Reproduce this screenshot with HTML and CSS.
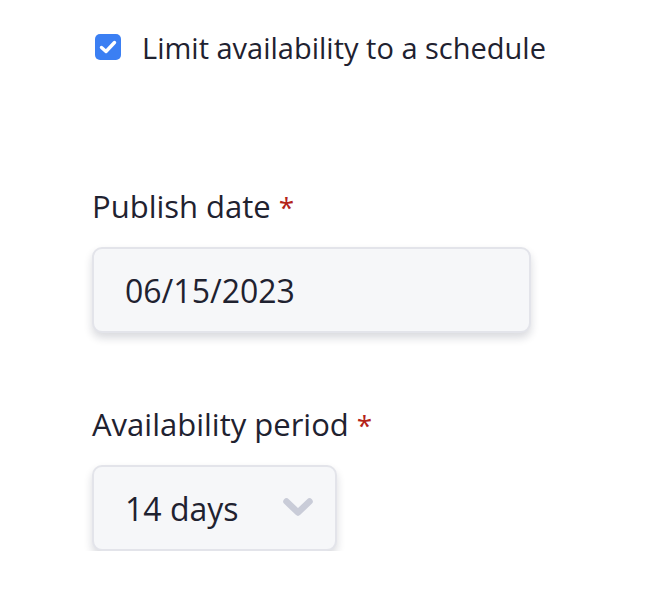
FILE: index.html
```html
<!DOCTYPE html>
<html lang="en">
<head>
    <meta charset="UTF-8">
    <meta name="viewport" content="width=device-width, initial-scale=1.0">
    <title>Schedule</title>
    <link rel="stylesheet" href="styles.css">
</head>
<body>
    <form class="panel">
        <label class="check-row">
            <span class="check-box">
                <svg width="18" height="14" viewBox="0 0 18 14"><path d="M2.5 7.5 L7 11.5 L15.5 2.5" fill="none" stroke="#fff" stroke-width="3.4" stroke-linecap="round" stroke-linejoin="round"/></svg>
            </span>
            <span class="check-text">Limit availability to a schedule</span>
        </label>

        <div class="field field-date">
            <label class="field-label">Publish date <span class="req">*</span></label>
            <div class="input date-input">06/15/2023</div>
        </div>

        <div class="field field-period">
            <label class="field-label">Availability period <span class="req">*</span></label>
            <div class="input select-input">
                <span>14 days</span>
                <svg class="chevron" width="32" height="22" viewBox="0 0 32 22"><path d="M4.5 4.5 L16 15.5 L27.5 4.5" fill="none" stroke="#c9ccd8" stroke-width="6.5" stroke-linecap="round" stroke-linejoin="round"/></svg>
            </div>
        </div>
    </form>
</body>
</html>
```

FILE: styles.css
```css
/* Page */
body {
    margin: 0;
    background-color: #ffffff;
    font-family: "Open Sans", "Noto Sans", sans-serif;
    color: #1f2230;
}

.panel {
    padding: 30px 0 0 92px;
}

/* Checkbox row */
.check-row {
    display: flex;
    align-items: center;
    gap: 21px;
    margin-left: 3px;
    font-size: 29px;
    line-height: 30px;
}

.check-text {
    padding-top: 3px;
}

.check-box {
    width: 26px;
    height: 26px;
    border-radius: 5px;
    background-color: #3b7ff3;
    display: flex;
    align-items: center;
    justify-content: center;
}

/* Fields */
.field {
    display: flex;
    flex-direction: column;
    gap: 23px;
}

.field-date {
    margin-top: 126px;
}

.field-period {
    margin-top: 74px;
}

.field-label {
    font-size: 31px;
    line-height: 34px;
}

.req {
    color: #b42318;
    font-size: 28px;
}

.input {
    box-sizing: border-box;
    height: 86px;
    border: 2px solid #e3e4ea;
    border-radius: 10px;
    background-color: #f6f7f9;
    box-shadow: 0 5px 9px rgba(20, 25, 50, 0.16);
    font-size: 32px;
    display: flex;
    align-items: center;
    padding-left: 31px;
}

.date-input {
    width: 439px;
}

.select-input {
    width: 245px;
    justify-content: space-between;
    padding-right: 21px;
}
```
